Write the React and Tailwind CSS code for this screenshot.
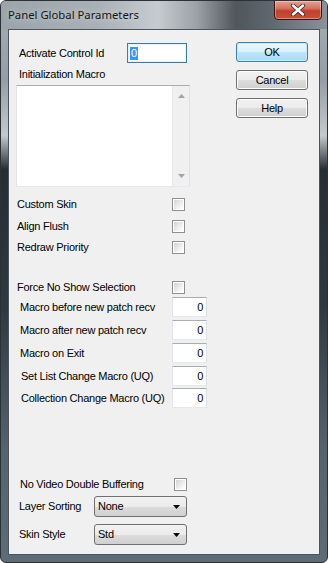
import React from 'react';

const FONT = { fontFamily: '"Liberation Sans", Arial, sans-serif' };

function Checkbox() {
  return (
    <div className="w-[13px] h-[13px] border border-[#8e8f8f] bg-white p-[1px] shrink-0">
      <div className="w-full h-full bg-[linear-gradient(135deg,#d4d4d4,#f4f4f4_70%,#ffffff)]" />
    </div>
  );
}

function NumBox() {
  return (
    <div className="w-[35px] h-[20px] shrink-0 border border-[#abadb3] border-l-[#e2e3ea] border-r-[#dbdfe6] border-b-[#e3e9ef] bg-white flex items-center justify-end pr-[3px] text-[11px] text-black">
      0
    </div>
  );
}

function CheckRow({ label, labelW, pl, mt }) {
  return (
    <div className={`flex items-center h-[13px] ${mt}`}>
      <span className={`${labelW} ${pl} leading-none`}>{label}</span>
      <Checkbox />
    </div>
  );
}

function NumRow({ label, pl, mt }) {
  return (
    <div className={`flex items-center h-[20px] ${mt}`}>
      <span className={`w-[163px] ${pl} leading-none`}>{label}</span>
      <NumBox />
    </div>
  );
}

function Combo({ value }) {
  return (
    <div className="w-[93px] h-[21px] rounded-[3px] border border-[#707070] bg-[linear-gradient(#f2f2f2,#ebebeb_50%,#dddddd_51%,#cfcfcf)] flex items-center justify-between pl-[3px] pr-[6px] shrink-0">
      <span className="leading-none">{value}</span>
      <svg width="7" height="4" viewBox="0 0 7 4">
        <path d="M0 0h7L3.5 4z" fill="#000" />
      </svg>
    </div>
  );
}

function Button({ children, primary }) {
  return (
    <div
      className={`h-[20px] w-[72px] rounded-[3px] border flex items-center justify-center leading-none ${
        primary
          ? 'border-[#3c7fb1] bg-[linear-gradient(#eaf6fd,#d9f0fc_50%,#bee6fd_51%,#a7d9f5)] shadow-[inset_0_0_0_1px_#c6e8fa]'
          : 'border-[#707070] bg-[linear-gradient(#f2f2f2,#ebebeb_50%,#dddddd_51%,#cfcfcf)] shadow-[inset_0_0_0_1px_#fcfcfc]'
      }`}
    >
      {children}
    </div>
  );
}

function CloseButton() {
  return (
    <div className="w-[48px] h-[20px] -mt-[1px] rounded-b-[4px] border border-[#3b1510] bg-[linear-gradient(#e8a091,#d27563_40%,#c2402b_55%,#c9503a)] flex items-center justify-center shadow-[inset_0_0_0_1px_rgba(255,255,255,0.35)]">
      <svg width="16" height="12" viewBox="0 0 16 12">
        <path d="M3 1.5L13 10.5M13 1.5L3 10.5" stroke="#4a2a26" strokeWidth="4.2" strokeLinecap="round" />
        <path d="M3 1.5L13 10.5M13 1.5L3 10.5" stroke="#ffffff" strokeWidth="2.4" strokeLinecap="round" />
      </svg>
    </div>
  );
}

export default function App() {
  return (
    <div className="w-[328px] h-[563px] bg-white">
      <div className="w-[328px] h-[563px] rounded-[6px] border border-[#2b3137] bg-[linear-gradient(180deg,#a6aeb4_0%,#959ea5_14%,#c4c9cc_24%,#262d33_30%,#2f3941_55%,#55636f_80%,#5e6c78_100%)] flex flex-col overflow-hidden">
        {/* title bar */}
        <div className="h-[28px] flex items-start justify-between pl-[7px] pr-[5px] bg-[linear-gradient(90deg,#9ba4ab_0%,#a9b1b7_30%,#c6cbce_48%,#9aa2a8_60%,#4f575d_72%,#5d666d_82%,#8a9399_100%)]">
          <span
            className="mt-[7px] text-[11.3px] leading-[14px] text-[#151515]"
            style={{ fontFamily: '"Noto Sans", sans-serif', textShadow: '0 0 6px rgba(255,255,255,0.7)' }}
          >
            Panel Global Parameters
          </span>
          <CloseButton />
        </div>

        {/* client area */}
        <div
          className="mx-[7px] h-[526px] border border-[#4a5560] bg-[#f0f0f0] flex text-[11px] tracking-[-0.25px] text-black"
          style={FONT}
        >
          <div className="flex-1 flex flex-col">
            <div className="flex items-center h-[20px] mt-[13px]">
              <span className="w-[118px] pl-[10px] leading-none">Activate Control Id</span>
              <div className="w-[60px] h-[20px] border border-[#3d7bad] bg-white flex items-center pl-[2px] shadow-[inset_0_0_0_1px_#e6f1f9]">
                <span className="bg-[#3399ff] text-white h-[13px] px-[1px] leading-[13px]">0</span>
              </div>
            </div>
            <div className="h-[14px] mt-[4px] pl-[10px] flex items-center leading-none">Initialization Macro</div>
            <div className="ml-[7px] mt-[4px] w-[174px] h-[102px] border border-[#abadb3] border-l-[#e2e3ea] border-r-[#dbdfe6] border-b-[#e3e9ef] bg-white flex justify-end">
              <div className="w-[17px] h-full bg-[#f0f0f0] flex flex-col items-center justify-between py-[8px] border-l border-[#e8e8e8]">
                <svg width="7" height="4" viewBox="0 0 7 4">
                  <path d="M0 4h7L3.5 0z" fill="#a3a3a3" />
                </svg>
                <svg width="7" height="4" viewBox="0 0 7 4">
                  <path d="M0 0h7L3.5 4z" fill="#a3a3a3" />
                </svg>
              </div>
            </div>

            <CheckRow label="Custom Skin" labelW="w-[163px]" pl="pl-[8px]" mt="mt-[11px]" />
            <CheckRow label="Align Flush" labelW="w-[163px]" pl="pl-[8px]" mt="mt-[9px]" />
            <CheckRow label="Redraw Priority" labelW="w-[163px]" pl="pl-[8px]" mt="mt-[8px]" />
            <CheckRow label="Force No Show Selection" labelW="w-[163px]" pl="pl-[8px]" mt="mt-[27px]" />

            <NumRow label="Macro before new patch recv" pl="pl-[11px]" mt="mt-[3px]" />
            <NumRow label="Macro after new patch recv" pl="pl-[11px]" mt="mt-[3px]" />
            <NumRow label="Macro on Exit" pl="pl-[11px]" mt="mt-[3px]" />
            <NumRow label="Set List Change Macro (UQ)" pl="pl-[12px]" mt="mt-[3px]" />
            <NumRow label="Collection Change Macro (UQ)" pl="pl-[12px]" mt="mt-[2px]" />

            <CheckRow label="No Video Double Buffering" labelW="w-[165px]" pl="pl-[11px]" mt="mt-[70px]" />

            <div className="flex items-center h-[21px] mt-[5px]">
              <span className="w-[85px] pl-[10px] leading-none">Layer Sorting</span>
              <Combo value="None" />
            </div>
            <div className="flex items-center h-[21px] mt-[7px]">
              <span className="w-[85px] pl-[10px] leading-none">Skin Style</span>
              <Combo value="Std" />
            </div>
          </div>

          <div className="w-[72px] mr-[11px] mt-[12px] flex flex-col gap-[8px]">
            <Button primary>OK</Button>
            <Button>Cancel</Button>
            <Button>Help</Button>
          </div>
        </div>
      </div>
    </div>
  );
}
